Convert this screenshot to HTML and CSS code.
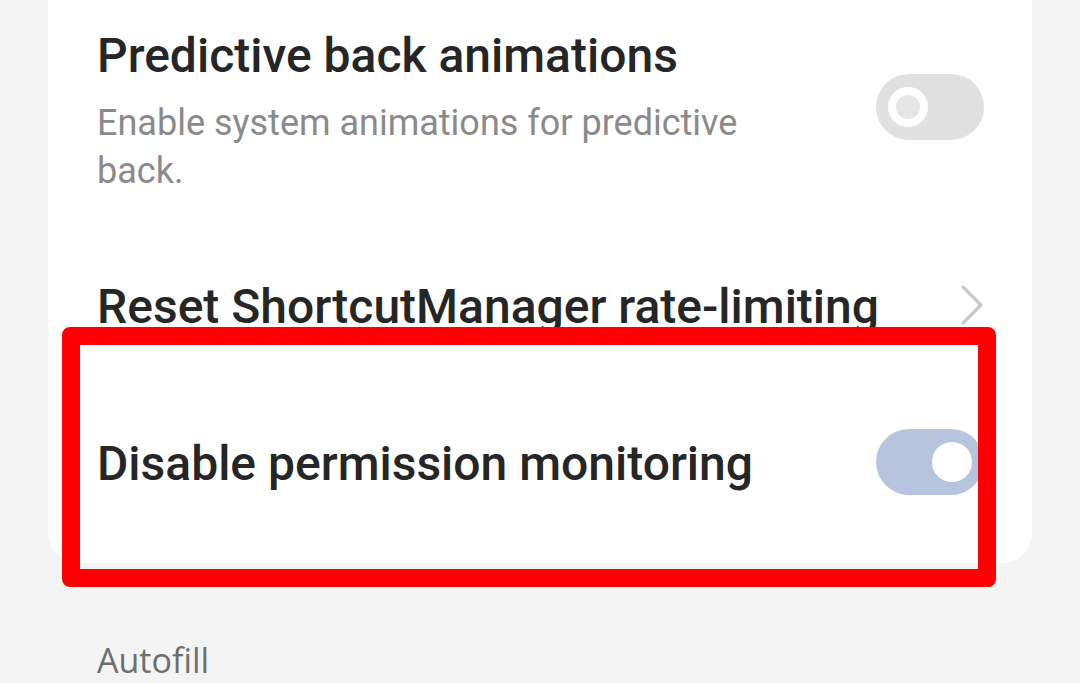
FILE: index.html
```html
<!DOCTYPE html>
<html>
<head>
<meta charset="utf-8">
<link rel="stylesheet" href="styles.css">
</head>
<body>
<div class="screen">
  <div class="card">
    <div class="row row-pred">
      <div class="text">
        <div class="title">Predictive back animations</div>
        <div class="desc">Enable system animations for predictive back.</div>
      </div>
      <div class="switch off"><span class="knob"></span></div>
    </div>
    <div class="row row-reset">
      <div class="text">
        <div class="title">Reset ShortcutManager rate-limiting</div>
      </div>
      <svg class="chev" width="24" height="40" viewBox="0 0 24 40"><path d="M3 2 L21 20 L3 38" fill="none" stroke="#c9c9c9" stroke-width="3.2" stroke-linecap="round" stroke-linejoin="round"/></svg>
    </div>
    <div class="row row-disable">
      <div class="text">
        <div class="title">Disable permission monitoring</div>
      </div>
      <div class="switch on"><span class="knob"></span></div>
    </div>
  </div>
  <div class="section">Autofill</div>
  <div class="highlight"></div>
</div>
</body>
</html>
```
FILE: styles.css
```css
html, body {
  margin: 0;
  padding: 0;
}
body {
  background: #f4f4f4;
  width: 1080px;
  height: 683px;
  overflow: hidden;
  font-family: Roboto, "Liberation Sans", sans-serif;
}
.screen {
  position: relative;
  width: 1080px;
  height: 683px;
  overflow: hidden;
}
.card {
  margin: -40px 48px 0 48px;
  background: #ffffff;
  border-radius: 0 0 30px 30px;
  padding-top: 40px;
  height: 603px;
  box-sizing: border-box;
}
.row {
  display: flex;
  align-items: flex-start;
  justify-content: space-between;
  padding: 0 48px 0 49px;
  box-sizing: border-box;
}
.text {
  display: flex;
  flex-direction: column;
}
.title {
  font-size: 48px;
  font-weight: 500;
  color: #262626;
  line-height: 56px;
}
.desc {
  margin-top: 15px;
  font-size: 36px;
  color: #8a8a8a;
  line-height: 48px;
  max-width: 680px;
}
.row-pred {
  padding-top: 28px;
  height: 195px;
}
.row-pred .switch {
  margin-top: 46px;
}
.row-reset {
  padding-top: 84px;
  height: 140px;
}
.row-reset .chev {
  margin-top: 6px;
  flex: none;
}
.row-disable {
  padding-top: 101px;
}
.row-disable .switch {
  margin-top: -7px;
}
.switch {
  width: 108px;
  height: 66px;
  border-radius: 33px;
  position: relative;
  flex: none;
}
.switch.off {
  background: #e0e0e0;
}
.switch.off .knob {
  position: absolute;
  left: 12px;
  top: 13px;
  width: 24px;
  height: 24px;
  border-radius: 50%;
  border: 8px solid #ffffff;
  background: #e6e6e6;
}
.switch.on {
  background: #b7c4dd;
}
.switch.on .knob {
  position: absolute;
  left: 56px;
  top: 13px;
  width: 40px;
  height: 40px;
  border-radius: 50%;
  background: #ffffff;
}
.section {
  padding: 74px 0 0 97px;
  font-family: "Open Sans", sans-serif;
  font-size: 34px;
  color: #6f6f6f;
}
.highlight {
  position: absolute;
  left: 62px;
  top: 327px;
  width: 934px;
  height: 260px;
  box-sizing: border-box;
  border: 18px solid #ff0000;
  border-radius: 8px;
}
```
